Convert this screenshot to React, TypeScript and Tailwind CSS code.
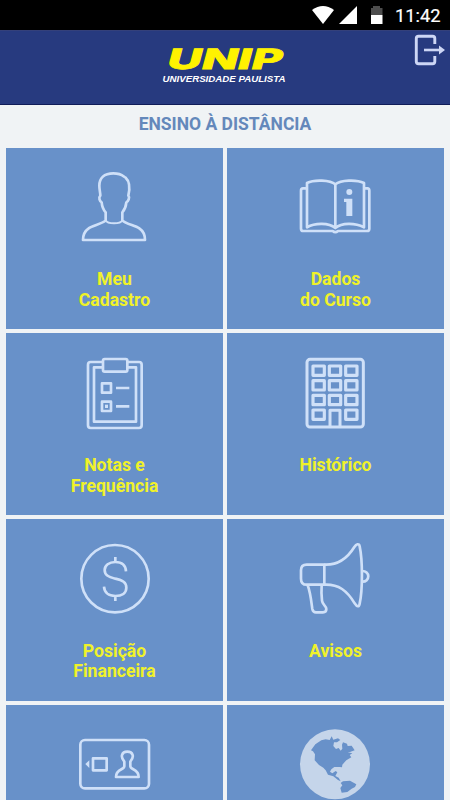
import React from 'react';

interface MenuItem {
  id: string;
  lines: string[];
  icon: React.ReactNode;
}

interface IconProps {
  viewBox: string;
  children: React.ReactNode;
}

function Icon({ viewBox, children }: IconProps) {
  return (
    <svg
      className="mt-[23.3px] h-[72px] w-[71px] shrink-0 overflow-visible"
      viewBox={viewBox}
      fill="none"
      stroke="#cfe0f8"
      strokeWidth="8"
      strokeLinejoin="round"
      aria-hidden="true"
    >
      {children}
    </svg>
  );
}

const windows = [
  [99, 75], [148, 75], [197, 75],
  [99, 119], [148, 119], [197, 119],
  [99, 163], [148, 163], [197, 163],
  [99, 207], [197, 207],
];

const items: MenuItem[] = [
  {
    id: 'cadastro',
    lines: ['Meu', 'Cadastro'],
    icon: (
      <Icon viewBox="57 63 213 216">
        <path d="M137 187 L137 211 C126 222 98 226 86 235 C73 244 69 254 69 270 H255 C255 253 250 243 238 235 C224 226 198 222 187 211 V187 C195 178 198 169 199 157 C205 154 210 142 205 137 C210 115 209 94 197 83 C189 79 187 70 160 70 C132 70 118 85 118 107 C118 120 121 127 121 137 C115 143 119 154 125 157 C126 169 129 178 137 187 Z" />
        <path d="M137 211 C143 223 181 223 187 211" strokeWidth="6" />
      </Icon>
    ),
  },
  {
    id: 'curso',
    lines: ['Dados', 'do Curso'],
    icon: (
      <Icon viewBox="60 63 213 216">
        <path d="M166 103 C150 90 103 88 81 99 V232 C105 218 147 218 166 234 C185 218 225 218 252 232 V99 C229 88 182 90 166 103 V234" />
        <path d="M81 115 H69 Q63 115 63 122 V236 Q63 243 70 243 H158 Q166 250 174 243 H261 Q268 243 268 236 V122 Q268 115 262 115 H252" />
        <circle cx="208" cy="126" r="9" fill="#cfe0f8" stroke="none" />
        <path d="M192 146 H217 V198 H199 V156 H192 Z" fill="#cfe0f8" stroke="none" />
      </Icon>
    ),
  },
  {
    id: 'notas',
    lines: ['Notas e', 'Frequência'],
    icon: (
      <Icon viewBox="57 48 213 216">
        <path d="M129 63 H92 Q84 63 84 71 V253 Q84 261 92 261 H237 Q245 261 245 253 V71 Q245 63 237 63 H202" />
        <path d="M129 79 H102 V242 H228 V79 H202" />
        <rect x="129" y="54" width="73" height="38" rx="5" />
        <rect x="126" y="127" width="27" height="28" />
        <rect x="126" y="182" width="27" height="28" />
        <rect x="135" y="191" width="9" height="10" fill="#cfe0f8" stroke="none" />
        <path d="M168 141 H208 M168 196 H208" />
      </Icon>
    ),
  },
  {
    id: 'historico',
    lines: ['Histórico'],
    icon: (
      <Icon viewBox="60 48 213 216">
        <rect x="81" y="55" width="169" height="203" rx="9" strokeWidth="9" />
        {windows.map(([x, y]) => (
          <rect key={`${x}-${y}`} x={x} y={y} width="34" height="28" strokeWidth="9.5" />
        ))}
        <path d="M150 257 V208 H180 V257" strokeWidth="9" />
      </Icon>
    ),
  },
  {
    id: 'financeira',
    lines: ['Posição', 'Financeira'],
    icon: (
      <Icon viewBox="57 66 213 216">
        <circle cx="165" cy="176" r="101" />
        <path d="M198 154 C197 135 186 126 166 126 C147 126 134 136 134 150 C134 165 144 170 166 176 C188 181 199 187 199 203 C199 219 186 228 166 228 C146 228 133 218 132 200 M166 111 V126 M166 228 V243" />
      </Icon>
    ),
  },
  {
    id: 'avisos',
    lines: ['Avisos'],
    icon: (
      <Icon viewBox="60 66 213 216">
        <path d="M133 134 H80 Q63 134 63 151 V176 Q63 194 80 194 H133 Z" />
        <path d="M133 134 C176 136 202 115 223 81 C229 72 237 69 239 79 C248 121 248 211 239 251 C237 262 231 261 224 250 C201 212 176 192 133 194" />
        <path d="M245 153 C271 151 272 187 245 185" />
        <path d="M83 196 C91 216 94 245 97 267 Q99 277 108 277 H129 Q139 277 139 267 C139 257 127 255 126 242 C124 226 124 211 125 196" />
      </Icon>
    ),
  },
  {
    id: 'carteirinha',
    lines: [],
    icon: (
      <Icon viewBox="57 114 213 216">
        <rect x="61" y="150" width="206" height="145" rx="14" />
        <path d="M76 222 L88 211 V234 Z" fill="#cfe0f8" stroke="none" />
        <rect x="99" y="205" width="41" height="36" />
        <path d="M193 215 V229 C193 240 168 236 168 261 H236 C236 236 211 240 211 229 V215 C224 200 219 185 202 185 C185 185 180 200 193 215 Z" />
      </Icon>
    ),
  },
  {
    id: 'internacional',
    lines: [],
    icon: (
      <Icon viewBox="60 114 213 216">
        <circle cx="165" cy="223" r="105" fill="#c5d5ea" stroke="none" />
        <path
          d="M93 181 L106 163 L124 151 L137 148 L149 150 L155 139 L160 149 L174 145 L181 150 L171 157 L162 157 L160 168 L168 177 L176 174 L182 182 L187 176 L186 164 L189 157 L201 161 L203 168 L215 167 L224 181 L210 186 L203 187 L217 190 L209 195 L214 202 L199 211 L187 224 L186 232 L179 231 L163 231 L154 238 L150 245 L157 250 L167 243 L172 247 L166 258 L176 263 L182 274 L174 270 L160 259 L144 254 L137 241 L130 233 L117 225 L104 211 L105 193 L99 184 Z M189 274 L210 272 L229 283 L225 291 L215 296 L202 306 L185 308 L181 294 L187 286 L182 279 Z"
          fill="#6891c9"
          stroke="none"
        />
      </Icon>
    ),
  },
];

function StatusBar() {
  return (
    <div className="flex h-[30px] justify-end bg-black">
      <svg className="h-[30px] w-[138px]" viewBox="0 0 138 30" aria-hidden="true">
        <path d="M0 10 Q11 2 22 10 L11 24 Z" fill="#fff" />
        <path d="M45 6 V24 H27 Z" fill="#fff" />
        <path d="M61 6 H68 V8 H70.500 V15 H59 V8 H61 Z" fill="#4d4d4d" />
        <path d="M59 15 H70.500 V24 H59 Z" fill="#fff" />
        <text
          x="83"
          y="22"
          fill="#fff"
          fontFamily="Roboto, sans-serif"
          fontSize="18.5"
          fontWeight="400"
          stroke="#fff"
          strokeWidth="0.2"
          textLength="45.5"
          lengthAdjust="spacingAndGlyphs"
        >
          11:42
        </text>
      </svg>
    </div>
  );
}

function Header() {
  return (
    <header className="relative flex h-[75px] justify-center border-t border-b border-t-[#34407a] border-b-[#101c58] bg-[#273a7f]">
      <svg
        className="mt-[9px] h-[50px] w-[130px]"
        viewBox="160 40 130 50"
        fontFamily="Liberation Sans, Arial, sans-serif"
        fontWeight="700"
      >
        <text
          transform="translate(165.500 69) skewX(-15)"
          fill="#fff200"
          stroke="#fff200"
          strokeWidth="0.8"
          fontFamily="Inter, sans-serif"
          fontSize="28"
          fontWeight="800"
          textLength="115"
          lengthAdjust="spacingAndGlyphs"
        >
          UNIP
        </text>
        <text
          x="162.500"
          y="81.5"
          fill="#fff"
          fontSize="9.6"
          fontStyle="italic"
          textLength="123"
          lengthAdjust="spacingAndGlyphs"
        >
          UNIVERSIDADE PAULISTA
        </text>
      </svg>
      <button type="button" aria-label="Sair" className="absolute top-[3px] right-1">
        <svg
          className="h-[32px] w-[32px]"
          viewBox="414 34 32 32"
          fill="none"
          stroke="#cdd6f5"
          strokeWidth="2.900"
        >
          <path d="M434.800 44 V38.500 Q434.800 36.300 432.600 36.300 H418.500 Q416.300 36.300 416.300 38.500 V61.500 Q416.300 63.700 418.500 63.700 H432.600 Q434.800 63.700 434.800 61.500 V56" />
          <path d="M424 50 H440" strokeWidth="2.600" />
          <path d="M439 45.500 L445 50 L439 54.500 Z" fill="#cdd6f5" stroke="none" />
        </svg>
      </button>
    </header>
  );
}

export default function App() {
  return (
    <div className="h-[800px] w-[450px] overflow-hidden bg-[#f0f3f5] font-['Roboto',sans-serif]">
      <StatusBar />
      <Header />
      <h1 className="flex h-[42.6px] items-center justify-center pb-[4px] text-[17.5px] font-bold text-[#6488bb]">
        ENSINO À DISTÂNCIA
      </h1>
      <main className="grid grid-cols-[217px_217px] gap-1 pl-1.5">
        {items.map((item) => (
          <button
            key={item.id}
            type="button"
            className="flex h-[181.7px] flex-col items-center bg-[#6891c9]"
          >
            {item.icon}
            <span className="mt-[26.6px] text-[17.6px] leading-[20.5px] font-bold text-[#f0f229]">
              {item.lines.map((line) => (
                <span key={line} className="block">
                  {line}
                </span>
              ))}
            </span>
          </button>
        ))}
      </main>
    </div>
  );
}
